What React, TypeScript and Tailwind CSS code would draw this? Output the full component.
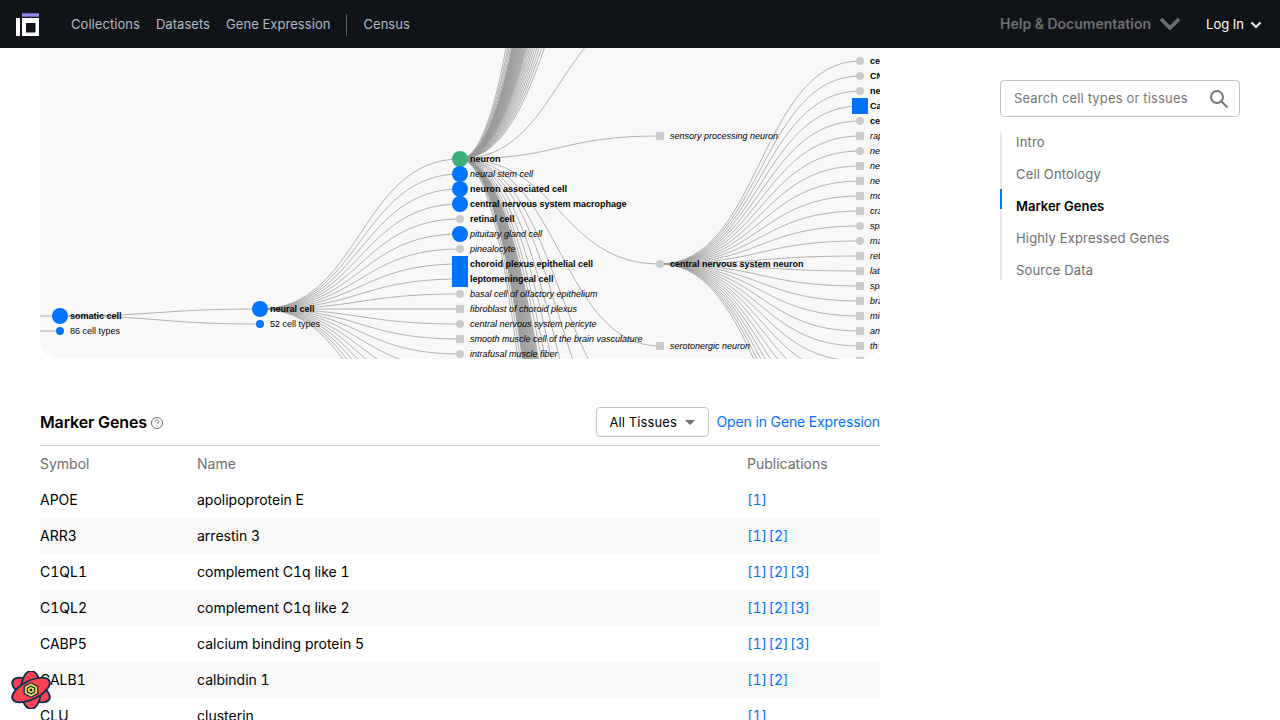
import React from "react";

const link = (x0: number, y0: number, x1: number, y1: number) => {
  const m = (x0 + x1) / 2;
  return `M${x0},${y0}C${m},${y0} ${m},${y1} ${x1},${y1}`;
};

type N = { y: number; t: string; b?: boolean; kind: "c" | "s" | "blue" | "green" | "bluerect" };

const mid: N[] = [
  { y: 159, t: "neuron", b: true, kind: "green" },
  { y: 174, t: "neural stem cell", kind: "blue" },
  { y: 189, t: "neuron associated cell", b: true, kind: "blue" },
  { y: 204, t: "central nervous system macrophage", b: true, kind: "blue" },
  { y: 219, t: "retinal cell", b: true, kind: "c" },
  { y: 234, t: "pituitary gland cell", kind: "blue" },
  { y: 249, t: "pinealocyte", kind: "c" },
  { y: 264, t: "choroid plexus epithelial cell", b: true, kind: "bluerect" },
  { y: 279, t: "leptomeningeal cell", b: true, kind: "bluerect" },
  { y: 294, t: "basal cell of olfactory epithelium", kind: "c" },
  { y: 309, t: "fibroblast of choroid plexus", kind: "s" },
  { y: 324, t: "central nervous system pericyte", kind: "c" },
  { y: 339, t: "smooth muscle cell of the brain vasculature", kind: "s" },
  { y: 354, t: "intrafusal muscle fiber", kind: "c" },
];

const right: N[] = [
  { y: 61, t: "cerebral cortex neuron", b: true, kind: "c" },
  { y: 76, t: "CNS interneuron", b: true, kind: "c" },
  { y: 91, t: "neuron of the forebrain", b: true, kind: "c" },
  { y: 106, t: "Cajal-Retzius cell", b: true, kind: "bluerect" },
  { y: 121, t: "cerebellar neuron", b: true, kind: "c" },
  { y: 136, t: "raphe nuclei neuron", kind: "s" },
  { y: 151, t: "neuron of cerebral nucleus", kind: "c" },
  { y: 166, t: "neuron of the substantia nigra", kind: "s" },
  { y: 181, t: "neuron of the dorsal spinal cord", kind: "s" },
  { y: 196, t: "motor neuron", kind: "s" },
  { y: 211, t: "cranial motor neuron", kind: "s" },
  { y: 226, t: "spinal cord interneuron", kind: "c" },
  { y: 241, t: "mature neuron", kind: "c" },
  { y: 256, t: "retinal neuron", kind: "s" },
  { y: 271, t: "lateral line neuron", kind: "s" },
  { y: 286, t: "spinal cord neuron", kind: "s" },
  { y: 301, t: "brainstem neuron", kind: "s" },
  { y: 316, t: "midbrain neuron", kind: "s" },
  { y: 331, t: "amygdala neuron", kind: "s" },
  { y: 346, t: "thalamic neuron", kind: "s" },
  { y: 361, t: "hypothalamus neuron", kind: "s" },
];

function Node({ x, n }: { x: number; n: N }) {
  if (n.kind === "c") return <circle cx={x} cy={n.y} r={4} fill="#cccccc" />;
  if (n.kind === "s") return <rect x={x - 4} y={n.y - 4} width={8} height={8} fill="#cccccc" />;
  if (n.kind === "blue") return <circle cx={x} cy={n.y} r={8} fill="#0073ff" />;
  if (n.kind === "green") return <circle cx={x} cy={n.y} r={8} fill="#3cb179" />;
  return <rect x={x - 8} y={n.y - 8} width={16} height={16} fill="#0073ff" />;
}

function Label({ x, y, t, b, i }: { x: number; y: number; t: string; b?: boolean; i?: boolean }) {
  return (
    <text x={x} y={y + 3} fontSize={9} fontWeight={b ? 700 : 400} fontStyle={i ? "italic" : "normal"} fill="#000000">
      {t}
    </text>
  );
}

function Tree() {
  const paths: string[] = [];
  paths.push(`M40,316L60,316`, `M40,331L60,331`);
  paths.push(link(60, 316, 260, 309), link(60, 316, 260, 324));
  for (let y = 159; y <= 459; y += 15) paths.push(link(260, 309, 460, y));
  // neuron -> upper children
  paths.push(link(460, 159, 660, 136), link(460, 159, 660, 7));
  for (let y = -160; y >= -385; y -= 25) paths.push(link(460, 159, 660, y));
  for (let y = -400; y >= -810; y -= 15) paths.push(link(460, 159, 660, y));
  [-860, -930, -1000, -1100].forEach((y) => paths.push(link(460, 159, 660, y)));
  // neuron -> lower children
  [264, 346, 423, 480, 560, 640, 720, 780].forEach((y) => paths.push(link(460, 159, 660, y)));
  for (let y = 835; y <= 1312; y += 15) paths.push(link(460, 159, 660, y));
  [1400, 1520].forEach((y) => paths.push(link(460, 159, 660, y)));
  // cns neuron -> right column
  for (let y = 61; y <= 481; y += 15) paths.push(link(660, 264, 860, y));

  return (
    <svg viewBox="40 48 840 311" width={840} height={311} className="block font-['Liberation_Sans',sans-serif]">
      <g fill="none" stroke="#999999" strokeWidth={0.75}>
        {paths.map((d, i) => (
          <path key={i} d={d} />
        ))}
      </g>
      <circle cx={60} cy={316} r={8} fill="#0073ff" />
      <circle cx={60} cy={331} r={4} fill="#0073ff" />
      <Label x={70} y={316} t="somatic cell" b />
      <Label x={70} y={331} t="86 cell types" />
      <circle cx={260} cy={309} r={8} fill="#0073ff" />
      <circle cx={260} cy={324} r={4} fill="#0073ff" />
      <Label x={270} y={309} t="neural cell" b />
      <Label x={270} y={324} t="52 cell types" />
      {mid.map((n) => (
        <g key={n.y}>
          <Node x={460} n={n} />
          <Label x={470} y={n.y} t={n.t} b={n.b} i={!n.b} />
        </g>
      ))}
      <rect x={656} y={132} width={8} height={8} fill="#cccccc" />
      <Label x={670} y={136} t="sensory processing neuron" i />
      <circle cx={660} cy={264} r={4} fill="#cccccc" />
      <Label x={670} y={264} t="central nervous system neuron" b />
      <rect x={656} y={342} width={8} height={8} fill="#cccccc" />
      <Label x={670} y={346} t="serotonergic neuron" i />
      {right.map((n) => (
        <g key={n.y}>
          <Node x={860} n={n} />
          <Label x={870} y={n.y} t={n.t} b={n.b} i={!n.b} />
        </g>
      ))}
    </svg>
  );
}

const rows: [string, string, number][] = [
  ["APOE", "apolipoprotein E", 1],
  ["ARR3", "arrestin 3", 2],
  ["C1QL1", "complement C1q like 1", 3],
  ["C1QL2", "complement C1q like 2", 3],
  ["CABP5", "calcium binding protein 5", 3],
  ["CALB1", "calbindin 1", 2],
  ["CLU", "clusterin", 1],
];

function Logo() {
  return (
    <svg width="24" height="24" viewBox="0 0 24 24" className="shrink-0">
      <rect x="6" y="1.3" width="17" height="3.4" fill="#8f8af0" />
      <rect x="0" y="6" width="4" height="18" fill="#ffffff" />
      <path fillRule="evenodd" d="M6 6h17v18H6zM10 11v9.5h9.5V11z" fill="#ffffff" />
    </svg>
  );
}

function Atom() {
  return (
    <svg viewBox="0 0 44 40" width="46" height="38" preserveAspectRatio="none" className="absolute left-[8px] top-[671px]">
      {[0, 60, 120].map((r) => (
        <ellipse key={r} cx="22" cy="20" rx="20" ry="9.5" transform={`rotate(${r + 30} 22 20)`} fill="#ff4154" stroke="#00304d" strokeWidth="1.8" />
      ))}
      <path d="M22 12.5l6.5 3.75v7.5L22 27.5l-6.5-3.75v-7.5z" fill="#ffd94c" stroke="#00304d" strokeWidth="1.2" />
      <path d="M22 16l3.5 2v4L22 24l-3.5-2v-4z" fill="none" stroke="#00304d" strokeWidth="1.2" />
      <circle cx="22" cy="20" r="1.4" fill="#00304d" />
    </svg>
  );
}

export default function App() {
  return (
    <div className="relative h-[720px] w-[1280px] overflow-hidden bg-white font-['Inter',sans-serif] text-black">
      <header className="flex h-12 items-center bg-[#101418] pl-4 pr-[18px]">
        <Logo />
        <nav className="ml-[31px] flex items-center pt-px text-[13px] tracking-[0.05px] text-[#b0bac5]">
          <span>Collections</span>
          <span className="ml-4">Datasets</span>
          <span className="ml-4">Gene Expression</span>
          <span className="ml-4 h-[22px] w-px bg-[#5c6066]" />
          <span className="ml-4">Census</span>
        </nav>
        <div className="ml-auto flex items-center text-sm font-semibold text-[#6e6e6e]">
          <span>Help &amp; Documentation</span>
          <svg width="22" height="14" viewBox="0 0 22 14" className="ml-2" fill="none" stroke="#6e6e6e" strokeWidth="3.6">
            <path d="M2 2l9 9 9-9" />
          </svg>
        </div>
        <div className="ml-[25px] flex items-center pt-px text-[13px] text-white">
          <span>Log In</span>
          <svg width="12" height="8" viewBox="0 0 12 8" className="ml-[6px]" fill="none" stroke="#ffffff" strokeWidth="2">
            <path d="M1.5 1.5L6 6l4.5-4.5" />
          </svg>
        </div>
      </header>

      <div className="flex pl-10">
        <main className="w-[840px] shrink-0">
          <div className="h-[311px] overflow-hidden rounded-b-[20px] bg-[#f8f8f8]">
            <Tree />
          </div>
          <div className="mt-12 flex h-[30px] items-center">
            <h2 className="text-base font-semibold tracking-[-0.15px]">Marker Genes</h2>
            <svg width="14" height="14" viewBox="0 0 14 14" className="ml-[3px] mt-[2px]" fill="none" stroke="#6e6e6e">
              <circle cx="7" cy="7" r="5.5" />
              <path d="M5.3 5.6a1.7 1.7 0 1 1 2.6 1.4c-.6.4-.9.6-.9 1.2" />
              <path d="M7 9.4v1" />
            </svg>
            <div className="ml-auto flex h-[30px] w-[113px] items-center rounded border border-[#c4c4c4] pl-[13px] pt-px text-[13px] tracking-[0.1px]">
              All Tissues
              <span className="ml-2 h-0 w-0 border-x-[5.5px] border-t-[5.5px] border-x-transparent border-t-[#6e6e6e]" />
            </div>
            <span className="ml-2 text-sm tracking-[-0.15px] text-[#0073ff]">Open in Gene Expression</span>
          </div>
          <div className="mt-2 border-t border-[#cccccc] text-sm tabular-nums">
            <div className="grid h-9 grid-cols-[157px_550px_133px] items-center text-[#6e6e6e]">
              <span>Symbol</span>
              <span>Name</span>
              <span>Publications</span>
            </div>
            {rows.map(([s, n, p], i) => (
              <div key={s} className={`grid h-9 grid-cols-[157px_550px_133px] items-center ${i % 2 ? "bg-[#f8f8f8]" : ""}`}>
                <span>{s}</span>
                <span>{n}</span>
                <span className="flex gap-[1.5px] text-[#0073ff]">
                  {[1, 2, 3].slice(0, p).map((k) => (
                    <span key={k}>[{k}]</span>
                  ))}
                </span>
              </div>
            ))}
          </div>
        </main>

        <aside className="ml-[120px] w-60 shrink-0 pt-8 text-[13px] tracking-[0.16px]">
          <div className="flex h-[37px] items-center justify-between rounded border border-[#c4c4c4] pl-[13px] pr-[10px] text-[#767676]">
            <span>Search cell types or tissues</span>
            <svg width="20" height="20" viewBox="0 0 20 20" fill="none" stroke="#767676" strokeWidth="2">
              <circle cx="8" cy="8" r="6" />
              <path d="M12.5 12.5L18.5 18.5" />
            </svg>
          </div>
          <div className="relative mt-[15px] flex h-[148px] flex-col gap-3 border-l-2 border-[#e8e8e8] pl-[14px] text-[#6e6e6e]">
            <span className="absolute -left-[2px] top-[57px] h-5 w-[2px] bg-[#0073ff]" />
            <span className="h-5 leading-5">Intro</span>
            <span className="h-5 leading-5">Cell Ontology</span>
            <span className="h-5 font-semibold leading-5 tracking-normal text-black">Marker Genes</span>
            <span className="h-5 leading-5">Highly Expressed Genes</span>
            <span className="h-5 leading-5">Source Data</span>
          </div>
        </aside>
      </div>
      <Atom />
    </div>
  );
}
